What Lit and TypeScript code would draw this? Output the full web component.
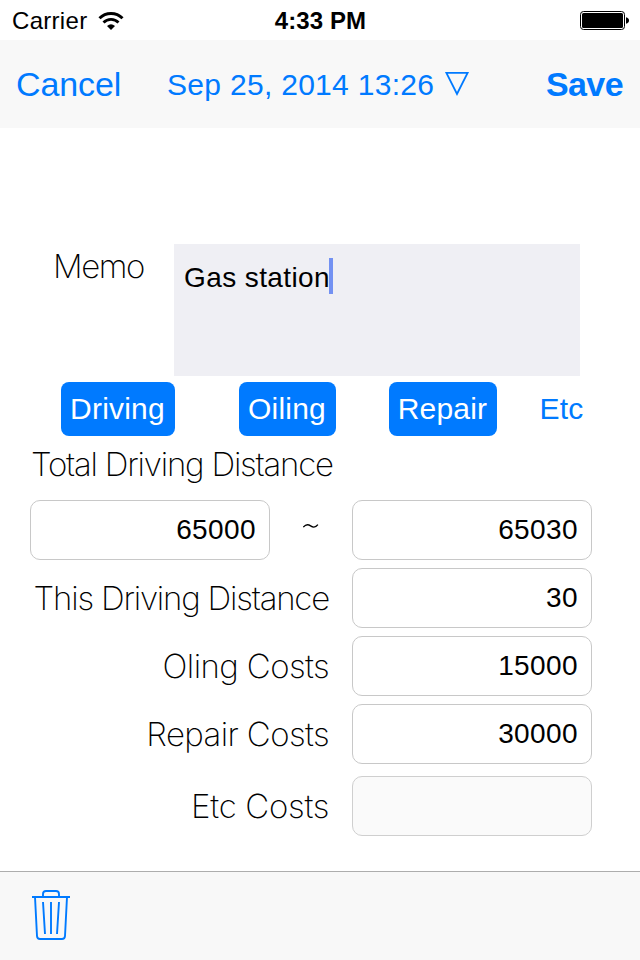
import { LitElement, html, css, nothing } from "lit";
import { customElement, property } from "lit/decorators.js";

@customElement("value-field")
class ValueField extends LitElement {
  @property() value = "";
  @property({ type: Boolean, reflect: true }) disabled = false;
  static styles = css`
    :host {
      display: flex;
      box-sizing: border-box;
      width: 240px;
      height: 60px;
      border: 1px solid #c8c8c8;
      border-radius: 10px;
      background: #fff;
      padding: 0 13px 0 0;
      align-items: center;
      justify-content: flex-end;
      font-size: 28px;
      letter-spacing: 0.4px;
    }
    :host([disabled]) {
      background: #fafafa;
      border-color: #cfcfcf;
    }
  `;
  render() {
    return html`${this.value || nothing}`;
  }
}

@customElement("app-root")
class AppRoot extends LitElement {
  static styles = css`
    :host {
      display: flex;
      flex-direction: column;
      width: 640px;
      height: 960px;
      overflow: hidden;
      background: #fff;
      color: #000;
      font-family: "Liberation Sans", Arial, sans-serif;
      white-space: nowrap;
    }
    svg { display: block; }
    .status {
      height: 40px;
      display: grid;
      grid-template-columns: 1fr auto 1fr;
      align-items: center;
      box-sizing: border-box;
      padding: 1px 11px 0 12px;
      font-size: 24px;
    }
    .carrier { display: flex; align-items: center; gap: 11px; letter-spacing: 0.3px; }
    .clock { font-weight: bold; letter-spacing: 0.1px; font-size: 24px; }
    .battery { justify-self: end; }
    .nav {
      height: 88px;
      background: #f8f8f8;
      color: #007aff;
      display: flex;
      align-items: center;
      box-sizing: border-box;
      padding: 0 17px 0 16px;
      font-size: 34px;
    }
    .cancel { width: 151px; letter-spacing: -0.1px; }
    .date { display: flex; align-items: center; gap: 10px; font-size: 30px; letter-spacing: 0.3px; padding-top: 1px; }
    .save { margin-left: auto; font-weight: bold; letter-spacing: -0.6px; }
    .form { flex: 1; padding-top: 116px; }
    .thin {
      font-family: Inter, "Liberation Sans", sans-serif;
      font-weight: 150;
      font-size: 33px;
      line-height: 40px;
      letter-spacing: -1.2px;
    }
    .memo { display: flex; height: 132px; }
    .memo-label { width: 121px; padding: 2px 0 0 53px; letter-spacing: -1.4px; }
    .memo-box {
      width: 406px;
      background: #efeff4;
      box-sizing: border-box;
      padding: 14px 0 0 10px;
      display: flex;
      align-items: flex-start;
      font-size: 28px;
      line-height: 40px;
      letter-spacing: 0.4px;
    }
    .caret { width: 4px; height: 36px; background: #7391f2; margin-left: -1px; }
    .chips { display: flex; margin: 6px 0 0 61px; height: 54px; }
    .chip {
      height: 54px;
      border-radius: 8px;
      background: #007aff;
      color: #fff;
      display: flex;
      align-items: center;
      justify-content: center;
      font-size: 30px;
      letter-spacing: 0.2px;
      box-sizing: border-box;
      padding-right: 1px;
    }
    .driving { width: 114px; margin-right: 64px; }
    .oiling { width: 97px; margin-right: 53px; }
    .repair { width: 108px; margin-right: 34px; }
    .etc { width: 62px; background: none; color: #007aff; }
    .total { margin: 8px 0 0 31px; }
    .range { display: flex; align-items: center; margin: 16px 0 8px 30px; }
    .tilde { width: 82px; display: flex; justify-content: center; padding-bottom: 9px; }
    .row { display: flex; align-items: center; width: 592px; height: 60px; margin-bottom: 8px; }
    .row .thin { flex: 1; text-align: right; margin-right: 23px; }
    .row .costs { letter-spacing: -0.6px; }
    .row.last { margin-top: 12px; }
    .row.last .costs { letter-spacing: -0.3px; }
    .toolbar {
      height: 89px;
      box-sizing: border-box;
      background: #f8f8f8;
      border-top: 1px solid #adadad;
      padding: 17px 0 0 32px;
    }
  `;

  render() {
    const rows = [
      ["This Driving Distance", "30"],
      ["Oling Costs", "15000"],
      ["Repair Costs", "30000"],
      ["Etc Costs", ""],
    ];
    return html`
      <header class="status">
        <span class="carrier">Carrier
          <svg width="26" height="20" viewBox="0 0 26 20" fill="none" stroke="#000">
            <path d="M1.5 7.2A16.3 16.3 0 0 1 24.5 7.2" stroke-width="3" />
            <path d="M5.5 11.5A10.6 10.6 0 0 1 20.5 11.5" stroke-width="2.8" />
            <path d="M9 15.1Q13 11.4 17 15.1L13 19Z" fill="#000" stroke="none" />
          </svg>
        </span>
        <span class="clock">4:33 PM</span>
        <svg class="battery" width="49" height="19" viewBox="0 0 49 19">
          <rect x="0.5" y="0.5" width="44" height="18" rx="3" fill="none" stroke="#000" />
          <rect x="2" y="2" width="41" height="15" rx="1.5" />
          <path d="M46 6.3Q49 7 49 9.5T46 12.7Z" />
        </svg>
      </header>
      <nav class="nav">
        <span class="cancel">Cancel</span>
        <span class="date">Sep 25, 2014 13:26
          <svg width="26" height="26" viewBox="0 0 26 26" fill="none" stroke="#007aff" stroke-width="1.8">
            <path d="M2.4 .9H23.6L13 22Z" />
          </svg>
        </span>
        <span class="save">Save</span>
      </nav>
      <main class="form">
        <div class="memo">
          <span class="thin memo-label">Memo</span>
          <div class="memo-box">Gas station<i class="caret"></i></div>
        </div>
        <div class="chips">
          <span class="chip driving">Driving</span>
          <span class="chip oiling">Oiling</span>
          <span class="chip repair">Repair</span>
          <span class="chip etc">Etc</span>
        </div>
        <div class="thin total">Total Driving Distance</div>
        <div class="range">
          <value-field value="65000"></value-field>
          <span class="tilde">
            <svg width="16" height="6" viewBox="0 0 16 6" fill="none" stroke="#000" stroke-width="1.3">
              <path d="M.3 4.2C3 .8 5.4 1.3 7.6 2.9S12.600 4.7 14.900 1.7" />
            </svg>
          </span>
          <value-field value="65030"></value-field>
        </div>
        ${rows.map(
          ([label, value]) => html`
            <div class="row ${value ? "" : "last"}">
              <span class="thin ${label.endsWith("Costs") ? "costs" : ""}">${label}</span>
              <value-field .value=${value} ?disabled=${!value}></value-field>
            </div>
          `
        )}
      </main>
      <footer class="toolbar">
        <svg width="38" height="54" viewBox="0 0 38 54" fill="none" stroke="#007aff" stroke-width="1.9">
          <path d="M0 8H38M11 8V5Q11 2 14 2H24Q27 2 27 5V8" />
          <path d="M3 8L5 47Q5.2 50 8 50H30Q32.8 50 33 47L35 8M11 13L13 45M19 13V45M27 13L25 45" />
        </svg>
      </footer>
    `;
  }
}
